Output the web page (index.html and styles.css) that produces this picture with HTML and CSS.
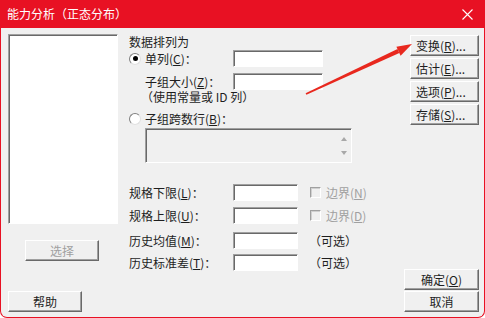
FILE: index.html
```html
<!DOCTYPE html>
<html lang="zh">
<head>
<meta charset="utf-8">
<title>能力分析（正态分布）</title>
<link rel="stylesheet" href="styles.css">
</head>
<body>
<div class="window">
  <div class="titlebar">
    <span class="title">能力分析（正态分布）</span>
    <svg class="close" width="11" height="11" viewBox="0 0 11 11"><path d="M0.5 0.5 L10.5 10.5 M10.5 0.5 L0.5 10.5" stroke="#fff" stroke-width="1.1" fill="none"/></svg>
  </div>
  <div class="body">
    <div class="col-left">
      <div class="listbox"></div>
      <div class="btn btn-select disabled">选择</div>
      <div class="btn btn-help">帮助</div>
    </div>
    <div class="col-mid">
      <div class="heading">数据排列为</div>
      <div class="row row-radio1">
        <span class="radio checked"></span>
        <span class="label lbl-ind">单列(<u>C</u>)：</span>
        <span class="textbox tb-wide"></span>
      </div>
      <div class="row row-sub">
        <span class="label lbl-ind">子组大小(<u>Z</u>)：</span>
        <span class="textbox tb-wide"></span>
      </div>
      <div class="note">（使用常量或 ID 列）</div>
      <div class="row row-radio2">
        <span class="radio"></span>
        <span class="label">子组跨数行(<u>B</u>)：</span>
      </div>
      <div class="multibox">
        <span class="spin spin-up"></span>
        <span class="spin spin-down"></span>
      </div>
      <div class="row spec spec1">
        <span class="label lbl-spec">规格下限(<u>L</u>)：</span>
        <span class="textbox tb-short"></span>
        <span class="checkbox"></span>
        <span class="dim">边界(<u>N</u>)</span>
      </div>
      <div class="row spec spec2">
        <span class="label lbl-spec">规格上限(<u>U</u>)：</span>
        <span class="textbox tb-short"></span>
        <span class="checkbox"></span>
        <span class="dim">边界(<u>D</u>)</span>
      </div>
      <div class="row spec spec3">
        <span class="label lbl-spec">历史均值(<u>M</u>)：</span>
        <span class="textbox tb-short"></span>
        <span class="opt">（可选）</span>
      </div>
      <div class="row spec spec4">
        <span class="label lbl-spec">历史标准差(<u>T</u>)：</span>
        <span class="textbox tb-short"></span>
        <span class="opt">（可选）</span>
      </div>
    </div>
    <div class="col-right">
      <div class="stack-top">
        <div class="btn btn-side">变换(<u>R</u>)...</div>
        <div class="btn btn-side">估计(<u>E</u>)...</div>
        <div class="btn btn-side">选项(<u>P</u>)...</div>
        <div class="btn btn-side">存储(<u>S</u>)...</div>
      </div>
      <div class="stack-bottom">
        <div class="btn btn-ok">确定(<u>O</u>)</div>
        <div class="btn btn-ok">取消</div>
      </div>
    </div>
  </div>
  <svg class="arrow" width="485" height="318" viewBox="0 0 485 318">
    <polygon points="305.6,93.2 306.4,94.8 399.3,53.0 397.5,49.0" fill="#e8281e"/>
    <polygon points="412,44 396.4,46.8 400.6,55.8" fill="#e8281e"/>
  </svg>
</div>
</body>
</html>
```

FILE: styles.css
```css
* { box-sizing: border-box; }
html, body {
  margin: 0;
  padding: 0;
  background: #ffffff;
}
body {
  font-family: "Noto Sans CJK SC", "Noto Sans", sans-serif;
  font-size: 12px;
  color: #1e1e1e;
}
.window {
  position: relative;
  width: 485px;
  height: 318px;
  display: flex;
  flex-direction: column;
}
.titlebar {
  height: 28px;
  background: #e81123;
  color: #fff;
  display: flex;
  align-items: center;
  justify-content: space-between;
  padding: 0 12px 0 7px;
  flex: none;
}
.title {
  font-size: 12px;
  line-height: 16px;
}
.close { display: block; }
.body {
  flex: 1;
  background: #f0f0f0;
  border: 1px solid #e81123;
  border-top: none;
  border-radius: 0 0 7px 7px;
  display: flex;
  padding: 6px 5px 5px 7px;
}
.col-left {
  width: 110px;
  display: flex;
  flex-direction: column;
}
.listbox {
  height: 190px;
  background: #fff;
  border: 1px solid;
  border-color: #a0a0a0 #fff #fff #a0a0a0;
  box-shadow: inset 1px 1px 0 #696969;
}
.btn {
  height: 21px;
  background: #f0f0f0;
  border: 1px solid;
  border-color: #fff #696969 #696969 #fff;
  box-shadow: inset -1px -1px 0 #a0a0a0;
  display: flex;
  align-items: center;
  justify-content: center;
  line-height: 14px;
  white-space: nowrap;
}
.btn.disabled { color: #a0a0a0; }
.btn-select {
  width: 74px;
  margin: 16px 0 0 17px;
}
.btn-help {
  width: 74px;
  margin-top: 30px;
}
.col-mid {
  flex: 1;
  margin-left: 11px;
  display: flex;
  flex-direction: column;
}
.heading {
  height: 16px;
  line-height: 16px;
}
.row {
  display: flex;
  align-items: center;
  height: 17px;
  line-height: 14px;
  white-space: nowrap;
}
.row-sub { margin-top: 6px; padding-left: 16px; }
.radio {
  width: 12px;
  height: 12px;
  border-radius: 50%;
  background: #fff;
  border: 1px solid;
  border-color: #808080 #e0e0e0 #e0e0e0 #808080;
  margin: 0 4px 0 0;
  position: relative;
  flex: none;
}
.radio.checked::after {
  content: "";
  position: absolute;
  left: 2.5px;
  top: 2.5px;
  width: 5px;
  height: 5px;
  border-radius: 50%;
  background: #000;
}
.label { display: inline-block; }
.lbl-ind { width: 88px; }
.textbox {
  display: block;
  height: 17px;
  background: #fff;
  border: 1px solid;
  border-color: #a0a0a0 #fff #fff #a0a0a0;
  box-shadow: inset 1px 1px 0 #696969;
  flex: none;
}
.tb-wide { width: 90px; }
.tb-short { width: 65px; }
.note {
  height: 14px;
  line-height: 14px;
  padding-left: 12px;
  white-space: nowrap;
}
.row-radio2 { margin-top: 7px; height: 16px; }
.multibox {
  margin: 1px 0 0 16px;
  width: 207px;
  height: 35px;
  background: #f0f0f0;
  border: 1px solid;
  border-color: #a0a0a0 #fff #fff #a0a0a0;
  box-shadow: inset 1px 1px 0 #696969;
  position: relative;
}
.spin {
  position: absolute;
  left: 195px;
  width: 0;
  height: 0;
  border-left: 3.5px solid transparent;
  border-right: 3.5px solid transparent;
}
.spin-up { top: 8px; border-bottom: 4px solid #a8a8a8; }
.spin-down { top: 22px; border-top: 4px solid #a8a8a8; }
.lbl-spec { width: 104px; }
.spec1 { margin-top: 21px; }
.spec2 { margin-top: 6px; }
.spec3 { margin-top: 8px; }
.spec4 { margin-top: 5px; }
.checkbox {
  width: 11px;
  height: 11px;
  margin-left: 12px;
  margin-right: 5px;
  background: #f0f0f0;
  border: 1px solid;
  border-color: #a0a0a0 #fff #fff #a0a0a0;
  box-shadow: inset 1px 1px 0 #d0d0d0;
  flex: none;
}
.dim { color: #a0a0a0; }
.opt { margin-left: 11px; }
.col-right {
  width: 75px;
  display: flex;
  flex-direction: column;
  justify-content: space-between;
}
.stack-top {
  margin-top: 1px;
  display: flex;
  flex-direction: column;
  gap: 2px;
  align-items: flex-end;
}
.btn-side {
  width: 69px;
  justify-content: flex-start;
  padding-left: 5px;
}
.stack-bottom {
  display: flex;
  flex-direction: column;
  gap: 1px;
}
.btn-ok { width: 75px; }
.arrow {
  position: absolute;
  left: 0;
  top: 0;
  pointer-events: none;
}
```
